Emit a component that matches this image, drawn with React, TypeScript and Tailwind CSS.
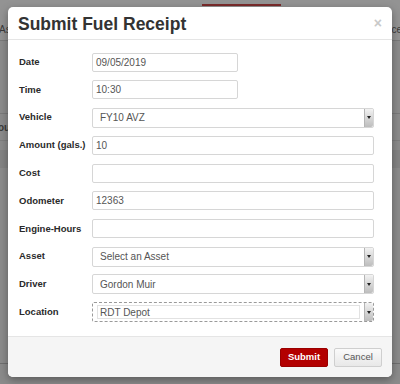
import React from 'react';

const font = { fontFamily: '"Liberation Sans", Arial, sans-serif' };

function TextInput({ value = '', short = false }: { value?: string; short?: boolean }) {
  return (
    <div
      className={`h-[19px] border border-[#d6d6d6] rounded-[2px] bg-white flex items-center pl-[3px] text-[10px] text-[#555] ${short ? 'w-[146px]' : 'flex-1'}`}
    >
      {value}
    </div>
  );
}

function SelectBox({ value, focused = false }: { value: string; focused?: boolean }) {
  return (
    <div
      className={`flex-1 h-[20px] rounded-[2px] bg-white flex items-stretch text-[10px] text-[#555] ${focused ? 'border border-dashed border-[#9a9a9a]' : 'border border-[#d6d6d6]'}`}
    >
      {focused ? (
        <div className="flex-1 flex items-center py-[2px] pl-[4px] pr-[4px]">
          <div className="flex-1 h-full border border-[#e2e2e2] flex items-center pl-[2px]">{value}</div>
        </div>
      ) : (
        <div className="flex-1 flex items-center pl-[7px]">{value}</div>
      )}
      <div className="w-[9px] bg-gradient-to-b from-[#f2f2f2] to-[#bdbdbd] border-l border-[#b5b5b5] rounded-r-[2px] flex items-center justify-center">
        <div className="w-0 h-0 border-l-[2.5px] border-r-[2.5px] border-t-[3px] border-l-transparent border-r-transparent border-t-[#222]" />
      </div>
    </div>
  );
}

function Row({ label, children }: { label: string; children: React.ReactNode }) {
  return (
    <div className="flex items-center h-[20px]">
      <div className="w-[73px] text-[9.5px] font-bold text-[#2a2a2a]">{label}</div>
      {children}
    </div>
  );
}

export default function App() {
  return (
    <div className="relative w-[400px] h-[384px] overflow-hidden bg-[#8b8b8b]" style={font}>
      {/* dimmed page behind the dialog */}
      <div className="flex flex-col">
        <div className="h-[6px] flex items-end bg-[#939393]">
          <div className="w-[202px]" />
          <div className="w-[79px] h-[2px] bg-[#7b2b2b]" />
        </div>
        <div className="h-[34px] bg-[#939393] flex items-end justify-between pb-[3px] text-[10px] text-[#3a3a3a]">
          <span className="-ml-[1px]">As</span>
          <span className="-mr-[2px]">ce</span>
        </div>
        <div className="h-[1px] bg-[#7a7a7a]" />
        <div className="h-[72px]" />
        <div className="h-[1px] bg-[#7a7a7a]" />
        <div className="h-[26px] flex items-center text-[10px] text-[#3a3a3a]">
          <span className="-ml-[2px] font-bold">ou</span>
        </div>
        <div className="h-[1px] bg-[#7f7f7f]" />
        <div className="h-[9px]" />
        <div className="h-[18px] bg-[#838383]" />
        <div className="h-[195px]" />
        <div className="h-[1px] bg-[#6f6f6f]" />
      </div>

      {/* dialog */}
      <div className="absolute left-[8px] top-[7px] w-[384px] h-[370px] bg-white rounded-[5px] shadow-[0_3px_8px_rgba(0,0,0,0.35)] flex flex-col overflow-hidden">
        <div className="h-[33px] border-b border-[#e5e5e5] flex items-center justify-between pl-[10px] pr-[10px]">
          <h1 className="text-[17.5px] font-bold text-[#333] pt-[2px]">Submit Fuel Receipt</h1>
          <span className="text-[14px] font-bold text-[#c9c9c9] leading-none">×</span>
        </div>

        <div className="flex-1 flex flex-col gap-[7.8px] pl-[11px] pr-[18px] pt-[12px]">
          <Row label="Date">
            <TextInput value="09/05/2019" short />
          </Row>
          <Row label="Time">
            <TextInput value="10:30" short />
          </Row>
          <Row label="Vehicle">
            <SelectBox value="FY10 AVZ" />
          </Row>
          <Row label="Amount (gals.)">
            <TextInput value="10" />
          </Row>
          <Row label="Cost">
            <TextInput />
          </Row>
          <Row label="Odometer">
            <TextInput value="12363" />
          </Row>
          <Row label="Engine-Hours">
            <TextInput />
          </Row>
          <Row label="Asset">
            <SelectBox value="Select an Asset" />
          </Row>
          <Row label="Driver">
            <SelectBox value="Gordon Muir" />
          </Row>
          <Row label="Location">
            <SelectBox value="RDT Depot" focused />
          </Row>
        </div>

        <div className="h-[41px] border-t border-[#e5e5e5] bg-[#f5f5f5] flex items-center justify-end gap-[6px] pr-[10px]">
          <button className="w-[48px] h-[19px] rounded-[2px] bg-[#b30000] border border-[#9a0000] text-white text-[9.5px] font-bold">
            Submit
          </button>
          <button className="w-[48px] h-[19px] rounded-[2px] bg-gradient-to-b from-[#fafafa] to-[#e8e8e8] border border-[#cfcfcf] text-[#555] text-[9.5px]">
            Cancel
          </button>
        </div>
      </div>
    </div>
  );
}
